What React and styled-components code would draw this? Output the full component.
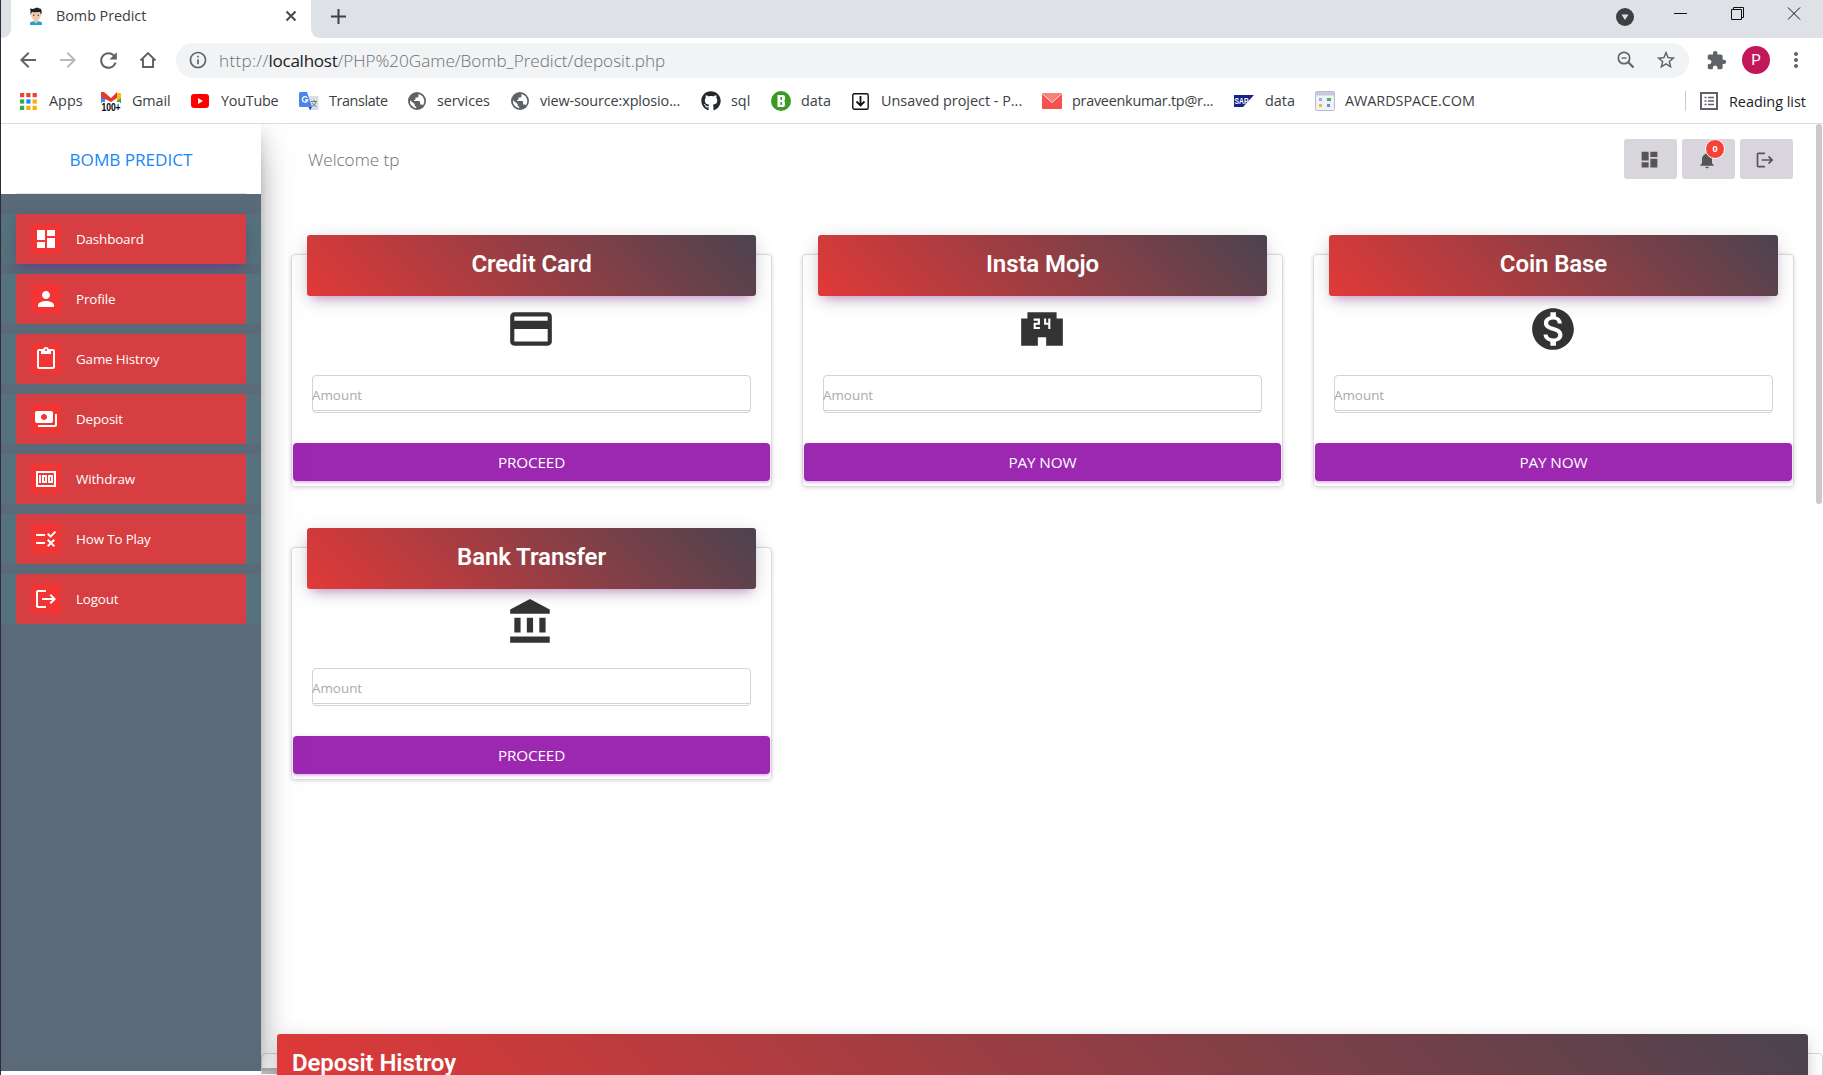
import React from "react";
import styled, { createGlobalStyle } from "styled-components";
import {
  MdDashboard, MdPerson, MdContentPaste, MdMoney, MdRule, MdLogout, MdCreditCard,
  MdMonetizationOn, MdNotifications, MdExtension, MdMoreVert, MdStarBorder,
  MdInfoOutline, MdArrowBack, MdArrowForward, MdRefresh,
} from "react-icons/md";
import { FaGithub } from "react-icons/fa";

const ui = `"Segoe UI", "Open Sans", "Noto Sans", sans-serif`;

const GlobalStyle = createGlobalStyle`
  * { box-sizing: border-box; }
  html, body { margin: 0; height: 1075px; overflow: hidden; background: #fff; }
  body { font-family: ${ui}; }
  svg { display: block; flex: none; }
`;

const Window = styled.div`
  width: 1823px;
  height: 1075px;
  display: flex;
  flex-direction: column;
  border-left: 1px solid #2f2b3c;
  background: #fff;
  overflow: hidden;
`;

/* ---------- browser frame ---------- */
const TabStrip = styled.div`
  height: 38px;
  flex: none;
  display: flex;
  background: #dee1e6;
`;
const TabEdge = styled.div`
  width: 10px;
  background: #fff;
  overflow: hidden;
  &::before {
    content: "";
    display: block;
    height: 38px;
    background: #dee1e6;
    border-bottom-right-radius: 9px;
  }
`;
const Tab = styled.div`
  width: 300px;
  display: flex;
  align-items: center;
  padding: 0 14px 6px 17px;
  background: #fff;
`;
const TabTitle = styled.span`
  flex: 1;
  margin-left: 12px;
  font-size: 14.4px;
  line-height: 20px;
  letter-spacing: -0.05px;
  color: #3c4043;
`;
const TabTail = styled.div`
  flex: 1;
  display: flex;
  background: #fff;
`;
const TabTailInner = styled.div`
  flex: 1;
  display: flex;
  justify-content: space-between;
  padding: 9px 22px 0 20px;
  background: #dee1e6;
  border-bottom-left-radius: 9px;
`;
const WindowControls = styled.div`
  display: flex;
  align-items: flex-start;
`;

const Toolbar = styled.div`
  height: 44px;
  flex: none;
  display: flex;
  align-items: center;
  padding: 0 16px 0 15px;
  color: #5f6368;
`;
const NavButton = styled.div`
  width: 24px;
  margin-right: 16px;
  display: flex;
  justify-content: center;
  color: ${(p) => (p.$dim ? "#bababc" : "#5f6368")};
`;
const Omnibox = styled.div`
  width: 1513px;
  height: 35px;
  padding: 0 12px;
  display: flex;
  align-items: center;
  gap: 20px;
  border-radius: 18px;
  background: #f1f3f4;
`;
const Url = styled.span`
  flex: 1;
  margin-left: -9px;
  padding-top: 2px;
  font-size: 17.1px;
  line-height: 24px;
  color: #6c7074;
  font-weight: 300;
`;
const Scheme = styled.span`
  letter-spacing: 0.3px;
`;
const Host = styled.span`
  font-weight: 400;
  letter-spacing: -0.3px;
  color: #202124;
`;
const Extensions = styled.div`
  flex: 1;
  display: flex;
  align-items: center;
  justify-content: flex-end;
`;
const Avatar = styled.div`
  width: 28px;
  height: 28px;
  margin: 0 14px 0 15px;
  border-radius: 50%;
  display: grid;
  place-items: center;
  background: #c2185b;
  color: #fff;
  font: 400 15px/28px Roboto, sans-serif;
`;
const MenuDots = styled(MdMoreVert)`
  margin-right: -1px;
`;

const BookmarkBar = styled.div`
  height: 42px;
  flex: none;
  display: flex;
  align-items: center;
  padding: 0 17px 3px 19px;
  border-bottom: 1px solid #dadce0;
`;
const Bookmark = styled.div`
  width: ${(p) => p.$width}px;
  flex: none;
  display: flex;
  align-items: center;
  font-size: 14.4px;
  line-height: 20px;
  letter-spacing: ${(p) => p.$track || 0}px;
  white-space: nowrap;
  color: #3c4043;
`;
const Favicon = styled.span`
  width: ${(p) => p.$width}px;
  flex: none;
`;
const ReadingList = styled.div`
  margin-left: auto;
  display: flex;
  align-items: center;
  gap: 11px;
  height: 20px;
  padding-left: 14px;
  border-left: 1px solid #c8cacd;
  font-size: 14.4px;
  color: #202124;
`;

/* ---------- page ---------- */
const Page = styled.div`
  flex: 1;
  min-height: 0;
  display: flex;
`;
const Sidebar = styled.aside`
  position: relative;
  z-index: 1;
  width: 260px;
  flex: none;
  height: 947px;
  display: flex;
  flex-direction: column;
  background: #5a6a79;
  box-shadow: 0 16px 38px -12px rgba(0, 0, 0, 0.56), 0 4px 25px 0 rgba(0, 0, 0, 0.12),
    0 8px 10px -5px rgba(0, 0, 0, 0.2);
  clip-path: inset(0 -60px 0 0);
`;
const Brand = styled.div`
  height: 70px;
  padding: 0 15px;
  background: #fff;
  span {
    display: block;
    height: 70px;
    border-bottom: 1px solid #dfe1e3;
    text-align: center;
    font-size: 17.2px;
    line-height: 72px;
    letter-spacing: -0.05px;
    color: #1a88f5;
  }
`;
const Menu = styled.ul`
  list-style: none;
  margin: 20px 0 0;
  padding: 0;
  display: flex;
  flex-direction: column;
  gap: 10px;
`;
const MenuItem = styled.li`
  height: 50px;
  padding: 0 15px;
  background: #57727f;
`;
const MenuLink = styled.a`
  height: 50px;
  padding-left: 15px;
  display: flex;
  align-items: center;
  gap: 15px;
  border-radius: 3px;
  background: #d73e41;
  color: #fff;
  font-size: 13.4px;
  font-weight: 500;
  letter-spacing: -0.15px;
  line-height: 20px;
  box-shadow: ${(p) => (p.$active ? "0 12px 20px -10px rgba(156,39,176,.28), 0 4px 20px 0 rgba(0,0,0,.12), 0 7px 8px -5px rgba(90,39,176,.3)" : "none")};
`;
const MenuIcon = styled.span`
  width: 30px;
  height: 30px;
  display: grid;
  place-items: center;
  background: #f13535;
`;

const Main = styled.main`
  flex: 1;
  min-width: 0;
  display: flex;
  flex-direction: column;
  padding: 15px 0 0;
`;
const TopBar = styled.header`
  height: 40px;
  display: flex;
  justify-content: space-between;
  padding: 0 30px 0 47px;
`;
const Welcome = styled.span`
  font-size: 17.1px;
  font-weight: 300;
  line-height: 42px;
  color: #6d6d6d;
`;
const Actions = styled.div`
  display: flex;
  gap: 5px;
`;
const ActionButton = styled.div`
  position: relative;
  width: 53px;
  height: 40px;
  padding: 1px 3px 0 0;
  display: grid;
  place-items: center;
  border-radius: 3px;
  background: #d9d5dd;
  color: #555;
`;
const Badge = styled.span`
  position: absolute;
  top: 0;
  right: 10px;
  width: 20px;
  height: 20px;
  border: 1px solid #fff;
  border-radius: 10px;
  background: #f44336;
  color: #fff;
  text-align: center;
  font: 700 9px/18px ${ui};
`;
const CardGrid = styled.section`
  display: grid;
  grid-template-columns: repeat(3, 481px);
  grid-auto-rows: 233px;
  gap: 60px 30px;
  margin: 75px 0 0 30px;
`;
const Card = styled.article`
  display: flex;
  flex-direction: column;
  border: 1px solid #dcdcde;
  border-radius: 4px;
  padding: 0 1px;
  box-shadow: 0 1px 4px 0 rgba(0, 0, 0, 0.14);
`;
const CardHeader = styled.h4`
  margin: -20px 14px 0;
  height: 61px;
  flex: none;
  border-radius: 3px;
  background: linear-gradient(45deg, #e23938, #4b434f);
  box-shadow: 0 4px 20px 0 rgba(0, 0, 0, 0.14), 0 7px 10px -5px rgba(156, 39, 176, 0.4);
  text-align: center;
  color: #fff;
  font: 600 24px/59px Roboto, sans-serif;
  letter-spacing: -0.1px;
`;
const CardIcon = styled.div`
  height: 50px;
  margin: 8px 1px 21px 0;
  display: flex;
  justify-content: center;
  color: #333;
`;
const AmountBox = styled.div`
  height: 38px;
  margin: 0 19px;
  border: 1px solid #ced4da;
  border-radius: 4px;
  background: linear-gradient(#d2d2d2, #d2d2d2) 0 34px / 100% 1px no-repeat;
  color: #aaa;
  font-size: 13.4px;
  line-height: 38px;
  text-indent: -1px;
`;
const PayButton = styled.button`
  height: 38px;
  margin-top: 30px;
  border: 0;
  border-radius: 4px;
  background: #9c27b0;
  box-shadow: 0 2px 2px 0 rgba(156, 39, 176, 0.2), 0 1px 5px 0 rgba(156, 39, 176, 0.15);
  color: #fff;
  font-family: ${ui};
  font-size: 15.3px;
  line-height: 38px;
  padding: 0;
  letter-spacing: -0.15px;
`;
const History = styled.section`
  height: 60px;
  margin-top: auto;
  margin-bottom: -38px;
  border: 1px solid #d8d8da;
  border-radius: 4px;
  padding: 0 14px 0 15px;
  background: linear-gradient(#b8b8b8, #b8b8b8) 0 14px / 15px 6px no-repeat;
`;
const HistoryHeader = styled.h4`
  position: relative;
  z-index: 2;
  margin: -20px 0 0;
  height: 61px;
  padding-left: 15px;
  border-radius: 3px;
  background: linear-gradient(45deg, #e23938, #4b434f);
  box-shadow: 0 4px 20px 0 rgba(0, 0, 0, 0.14), 0 7px 10px -5px rgba(156, 39, 176, 0.4);
  color: #fff;
  font: 600 24px/59px Roboto, sans-serif;
  letter-spacing: -0.1px;
`;
const ScrollTrack = styled.div`
  width: 7px;
  height: 100%;
  flex: none;
  margin-left: -7px;
  padding-right: 1px;
`;
const ScrollThumb = styled.div`
  height: 380px;
  border-radius: 3px;
  background: #cacaca;
`;

/* ---------- drawings ---------- */
const Glyph = ({ size = 24, d }) => (
  <svg width={size} height={size} viewBox="0 0 24 24" fill="currentColor"><path d={d} /></svg>
);
const PaymentsIcon = () => (
  <Glyph d="M19 14V6c0-1.1-.9-2-2-2H3c-1.1 0-2 .9-2 2v8c0 1.1.9 2 2 2h14c1.1 0 2-.9 2-2zm-9-1c-1.66 0-3-1.34-3-3s1.34-3 3-3 3 1.34 3 3-1.34 3-3 3zm13-6v11c0 1.1-.9 2-2 2H4v-2h17V7h2z" />
);
const StoreIcon = () => (
  <Glyph size={50} d="M19 7V4H5v3H2v13h8v-4h4v4h8V7h-3zm-8 3H9v1h2v1H8V9h2V8H8V7h3v3zm5 2h-1v-2h-2V7h1v2h1V7h1v5z" />
);
const BankIcon = () => (
  <Glyph size={50} d="M4 10v7h3v-7H4zm6 0v7h3v-7h-3zM2 22h19v-3H2v3zm14-12v7h3v-7h-3zm-4.500-9L2 6v2h19V6l-9.500-5z" />
);
const GlobeIcon = () => (
  <svg width="18" height="18" viewBox="0 0 18 18">
    <circle cx="9" cy="9" r="9" fill="#5f6368" />
    <path d="M10.500 2v2.200c0 .8-.7 1.300-1.500 1.300H7.500v1.600c0 .8-.6 1-1.500 1v.9h4.800c.8 0 1.300.6 1.300 1.400v2h1.200c.8 0 1.400.4 1.600 1a7.200 7.200 0 0 0-3-10.800zM8.200 16.200v-1.600c-1 0-1.600-.8-1.600-1.600v-.9L2 8.300a7.200 7.200 0 0 0 6.200 7.900z" fill="#fff" />
  </svg>
);
const PersonFavicon = () => (
  <svg width="16" height="18" viewBox="0 0 16 18">
    <path d="M2 18v-2.500l4-1.500h4l4 1.500V18z" fill="#1fa3d4" />
    <path d="M6 12h4v3l-2 1.500-2-1.500z" fill="#e8bfa0" />
    <ellipse cx="8" cy="8.500" rx="4.800" ry="5" fill="#f0cbae" />
    <path d="M2.500 8V4L2 1.500 5 2l4-1.500L13 2l.8 3-.8 3-1-3-5 .3L4 5z" fill="#20202a" />
    <path d="M5 8.200h1.500M9.500 8.200H11" stroke="#333" />
  </svg>
);
const AppsIcon = () => {
  const c = ["#ea4335", "#ea4335", "#ea4335", "#34a853", "#1a87f0", "#fbab0a", "#34a853", "#fbab0a", "#fbab0a"];
  return (
    <svg width="17" height="17">
      {c.map((f, i) => <rect key={i} x={(i % 3) * 6.3} y={Math.floor(i / 3) * 6.4} width="4.200" height="4.200" fill={f} />)}
    </svg>
  );
};
const GmailIcon = () => (
  <svg width="20" height="19" viewBox="0 0 20 19">
    <path d="M0 3v8h4V4z" fill="#4285f4" />
    <path d="M20 3v8h-4V4z" fill="#34a853" />
    <path d="M16 1h4v5l-4 3z" fill="#fbbc04" />
    <path d="M0 3V0h3l7 6 6-6v6l-6 4L0 5z" fill="#e33b2e" />
    <path d="M1 10h18v9H1z" fill="#fff" />
    <text x="0.500" y="18.500" textLength="19" lengthAdjust="spacingAndGlyphs" fontFamily="Liberation Sans" fontWeight="700" fontSize="11" fill="#000">100+</text>
  </svg>
);
const YouTubeIcon = () => (
  <svg width="18" height="14"><rect width="18" height="14" rx="3" fill="#f00" /><path d="M7 4v6l5-3z" fill="#fff" /></svg>
);
const TranslateIcon = () => (
  <svg width="20" height="19" viewBox="0 0 20 19">
    <path d="M9 4h9.500a1 1 0 0 1 1 1v12a1 1 0 0 1-1 1H12z" fill="#dcdfe2" />
    <path d="M1.500 0H8l5 15H1.500A1.500 1.500 0 0 1 0 13.500v-12A1.500 1.500 0 0 1 1.500 0z" fill="#4a86ee" />
    <path d="M9.500 15H13l-2 3.500z" fill="#2b4fc0" />
    <path d="M8.300 5.800A2.700 2.700 0 1 0 8.700 8H6.200" fill="none" stroke="#fff" strokeWidth="1.300" />
    <path d="M12 9.500h6M15 8v1.500M17 9.500c-.5 2.500-2 4-4 5M13.500 11c1 1.500 2 3 4 3.500" fill="none" stroke="#6b7f8c" />
  </svg>
);
const BIcon = () => (
  <svg width="20" height="20" viewBox="0 0 20 20">
    <circle cx="10" cy="10" r="10" fill="#3c9a22" />
    <path d="M6.500 4h5.500c1.500 0 2 1 2 2.500V9l-1 1 1 1v2.500c0 1.500-.5 2.500-2 2.500H6.500z" fill="#fff" />
    <path d="M10.200 6v3M10.200 11v3" stroke="#3c9a22" strokeWidth="1.500" />
  </svg>
);
const DownloadIcon = () => (
  <svg width="17" height="17" viewBox="0 0 17 17" fill="none" stroke="#111">
    <rect x=".8" y=".8" width="15.400" height="15.400" rx="1.500" strokeWidth="1.400" />
    <path d="M8.500 3v9M4.500 8.500l4 4 4-4" strokeWidth="1.800" />
  </svg>
);
const MailIcon = () => (
  <svg width="20" height="16"><rect width="20" height="16" rx="1" fill="#f8504f" /><path d="M0 0h20L10 9z" fill="#f7827e" /><path d="M0 .5l10 9 10-9" fill="none" stroke="#fde0df" /></svg>
);
const SapIcon = () => (
  <svg width="20" height="12">
    <path d="M0 0h20L9 12H0z" fill="#14248a" />
    <text x="0.500" y="9" textLength="14" lengthAdjust="spacingAndGlyphs" fontFamily="Liberation Sans" fontWeight="700" fontSize="9" fill="#fff">SAP</text>
  </svg>
);
const PageIcon = () => (
  <svg width="20" height="20" viewBox="0 0 20 20">
    <rect x=".5" y=".5" width="19" height="19" rx="1" fill="#f1f2f8" stroke="#b9bccd" />
    <path d="M1 1h18v3.500H1z" fill="#c6cadf" />
    <rect x="4" y="7" width="3" height="3" fill="#8fb0e8" /><rect x="12" y="7" width="4" height="3" fill="#58b04c" />
    <rect x="4" y="13" width="3" height="3" fill="#f0bb3c" /><rect x="12" y="13" width="3" height="3" fill="#6f87dc" />
  </svg>
);
const ListIcon = () => (
  <svg width="18" height="18" viewBox="0 0 18 18" fill="none" stroke="#5f6368">
    <rect x="1" y="1" width="16" height="16" strokeWidth="2" />
    <path d="M4.500 5.500h2M4.500 9h2M4.500 12.500h2M8 5.500h6M8 9h6M8 12.500h6" strokeWidth="1.500" />
  </svg>
);
const HomeIcon = () => (
  <svg width="18" height="18" viewBox="0 0 18 18" fill="none" stroke="#5f6368" strokeWidth="1.900">
    <path d="M1.500 9.500L9 2l7.500 7.500M4 8v8h10V8" />
  </svg>
);
const ZoomOutIcon = () => (
  <svg width="18" height="18" viewBox="0 0 18 18" fill="none" stroke="#5f6368">
    <circle cx="7" cy="7" r="5.700" strokeWidth="1.700" /><path d="M4.500 7h5" strokeWidth="1.400" /><path d="M11.300 11.300l5.200 5.200" strokeWidth="2.200" />
  </svg>
);
const TabMenuSvg = styled.svg`
  margin-top: -1px;
`;
const CaptionSvg = styled.svg`
  margin: -3px 0 0 39px;
`;
const TabMenuIcon = () => (
  <TabMenuSvg width="18" height="18"><circle cx="9" cy="9" r="9" fill="#3c4043" /><path d="M5.500 6.500h7L9 12z" fill="#dee1e6" /></TabMenuSvg>
);
const CaptionIcons = () => (
  <CaptionSvg width="128" height="16" viewBox="0 0 128 16" fill="none" stroke="#111">
    <path d="M1 7.500h13M58.500 3.500h10v10h-10zM60.500 3.500v-2h10v10h-2M115 1.500l12 12M127 1.500l-12 12" />
  </CaptionSvg>
);

/* ---------- data: icon, icon column, label, item width, tracking ---------- */
const bookmarks = [
  [<AppsIcon />, 29, "Apps", 81, 0],
  [<GmailIcon />, 31, "Gmail", 90, -0.1],
  [<YouTubeIcon />, 30, "YouTube", 108, -0.25],
  [<TranslateIcon />, 30, "Translate", 109, -0.4],
  [<GlobeIcon />, 29, "services", 103, -0.1],
  [<GlobeIcon />, 29, "view-source:xplosio...", 190, -0.12],
  [<FaGithub size={20} color="#24292e" />, 30, "sql", 70, 0],
  [<BIcon />, 30, "data", 81, 0],
  [<DownloadIcon />, 29, "Unsaved project - P...", 190, 0],
  [<MailIcon />, 30, "praveenkumar.tp@r...", 192, -0.25],
  [<SapIcon />, 31, "data", 81, 0],
  [<PageIcon />, 30, "AWARDSPACE.COM", 170, -0.05],
];
const menu = [
  [<MdDashboard size={24} />, "Dashboard"],
  [<MdPerson size={24} />, "Profile"],
  [<MdContentPaste size={24} />, "Game Histroy"],
  [<PaymentsIcon />, "Deposit"],
  [<MdMoney size={24} />, "Withdraw"],
  [<MdRule size={24} />, "How To Play"],
  [<MdLogout size={24} />, "Logout"],
];
const methods = [
  ["Credit Card", <MdCreditCard size={50} />, "PROCEED"],
  ["Insta Mojo", <StoreIcon />, "PAY NOW"],
  ["Coin Base", <MdMonetizationOn size={50} />, "PAY NOW"],
  ["Bank Transfer", <BankIcon />, "PROCEED"],
];

export default function App() {
  return (
    <Window>
      <GlobalStyle />
      <TabStrip>
        <TabEdge />
        <Tab>
          <PersonFavicon />
          <TabTitle>Bomb Predict</TabTitle>
          <svg width="12" height="12" viewBox="0 0 12 12" stroke="#45494d" strokeWidth="2"><path d="M1.500 1.500l9 9M10.500 1.500l-9 9" /></svg>
        </Tab>
        <TabTail>
          <TabTailInner>
            <svg width="15" height="15" stroke="#3c4043" strokeWidth="2"><path d="M7.500 0v15M0 7.500h15" /></svg>
            <WindowControls>
              <TabMenuIcon />
              <CaptionIcons />
            </WindowControls>
          </TabTailInner>
        </TabTail>
      </TabStrip>

      <Toolbar>
        <NavButton><MdArrowBack size={24} /></NavButton>
        <NavButton $dim><MdArrowForward size={24} /></NavButton>
        <NavButton><MdRefresh size={25} /></NavButton>
        <NavButton><HomeIcon /></NavButton>
        <Omnibox>
          <MdInfoOutline size={20} />
          <Url><Scheme>http://</Scheme><Host>localhost</Host>/PHP%20Game/Bomb_Predict/deposit.php</Url>
          <ZoomOutIcon />
          <MdStarBorder size={22} />
        </Omnibox>
        <Extensions>
          <MdExtension size={21} />
          <Avatar>P</Avatar>
          <MenuDots size={24} />
        </Extensions>
      </Toolbar>

      <BookmarkBar>
        {bookmarks.map(([icon, iconWidth, label, width, track], i) => (
          <Bookmark key={i} $width={width} $track={track}>
            <Favicon $width={iconWidth}>{icon}</Favicon>
            {label}
          </Bookmark>
        ))}
        <ReadingList><ListIcon />Reading list</ReadingList>
      </BookmarkBar>

      <Page>
        <Sidebar>
          <Brand><span>BOMB PREDICT</span></Brand>
          <Menu>
            {menu.map(([icon, label], i) => (
              <MenuItem key={label}>
                <MenuLink $active={i === 0}><MenuIcon>{icon}</MenuIcon>{label}</MenuLink>
              </MenuItem>
            ))}
          </Menu>
        </Sidebar>
        <Main>
          <TopBar>
            <Welcome>Welcome tp</Welcome>
            <Actions>
              <ActionButton><MdDashboard size={21} /></ActionButton>
              <ActionButton><MdNotifications size={20} /><Badge>0</Badge></ActionButton>
              <ActionButton><MdLogout size={20} /></ActionButton>
            </Actions>
          </TopBar>
          <CardGrid>
            {methods.map(([title, icon, action]) => (
              <Card key={title}>
                <CardHeader>{title}</CardHeader>
                <CardIcon>{icon}</CardIcon>
                <AmountBox>Amount</AmountBox>
                <PayButton>{action}</PayButton>
              </Card>
            ))}
          </CardGrid>
          <History>
            <HistoryHeader>Deposit Histroy</HistoryHeader>
          </History>
        </Main>
        <ScrollTrack><ScrollThumb /></ScrollTrack>
      </Page>
    </Window>
  );
}
